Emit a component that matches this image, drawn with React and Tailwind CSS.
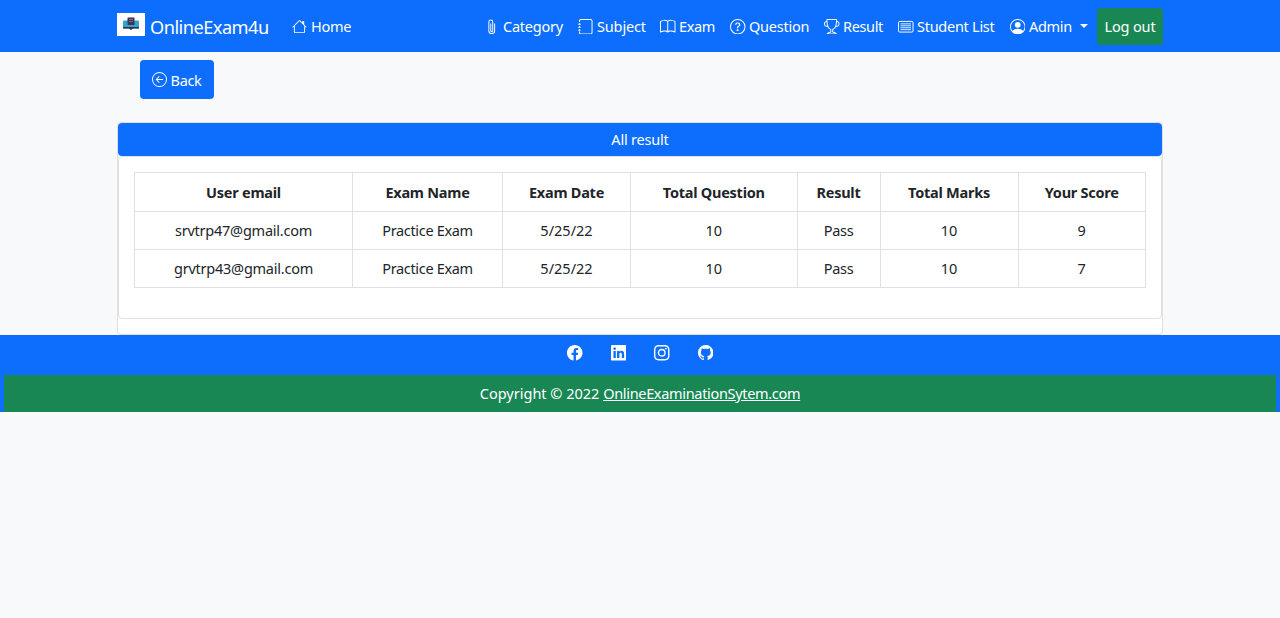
import {
  BsHouse, BsPaperclip, BsJournal, BsBook, BsQuestionCircle, BsTrophy,
  BsPersonCircle, BsArrowLeftCircle, BsFacebook, BsLinkedin, BsInstagram, BsGithub,
} from 'react-icons/bs';

function ListCard({ className }) {
  return (
    <svg viewBox="0 0 16 16" fill="none" stroke="currentColor" strokeLinecap="round" className={className}>
      <rect x=".5" y="2.500" width="15" height="11" rx="1.200" />
      <path d="M3 5h10M3 7h10M3 9h10M3 11h10" strokeWidth=".9" />
    </svg>
  );
}

const navItems = [
  { label: 'Category', Icon: BsPaperclip, box: 'w-[94px]', text: 'tracking-[-0.25px]' },
  { label: 'Subject', Icon: BsJournal, box: 'w-[82px]', text: 'tracking-[-0.15px]' },
  { label: 'Exam', Icon: BsBook, box: 'w-[70px]', text: 'tracking-[-0.4px]' },
  { label: 'Question', Icon: BsQuestionCircle, box: 'w-[94px]', text: 'tracking-[-0.25px]' },
  { label: 'Result', Icon: BsTrophy, box: 'w-[74px]', text: 'tracking-[-0.35px]' },
  { label: 'Student List', Icon: ListCard, box: 'w-[111.500px]', text: 'tracking-[-0.27px]' },
];

const columns = [
  { label: 'User email', width: 'w-[218px]' },
  { label: 'Exam Name', width: 'w-[150px]' },
  { label: 'Exam Date', width: 'w-[128px]' },
  { label: 'Total Question', width: 'w-[166.500px]' },
  { label: 'Result', width: 'w-[83px]' },
  { label: 'Total Marks', width: 'w-[138px]' },
  { label: 'Your Score', width: 'w-[127.500px]' },
];

const rows = [
  ['srvtrp47@gmail.com', 'Practice Exam', '5/25/22', '10', 'Pass', '10', '9'],
  ['grvtrp43@gmail.com', 'Practice Exam', '5/25/22', '10', 'Pass', '10', '7'],
];

const cellTracking = ['tracking-[-0.24px]', 'tracking-[-0.34px]', '', '', 'tracking-[-0.3px]', '', ''];

function Logo() {
  return (
    <svg viewBox="0 0 28 23" className="mb-[4px] h-[23px] w-[28px] shrink-0">
      <rect width="28" height="23" fill="#fff" />
      <rect x="6" y="7.500" width="16" height="8" rx="1" fill="#35a3d0" />
      <path d="M6 14h16v1.500h-6l-2 1.500-2-1.500H6z" fill="#27324f" />
      <rect x="10.500" y="4.500" width="7" height="7.500" rx=".5" fill="#3d3554" />
      <path d="M12 6.500h4M12 8.500h4" stroke="#8d7b96" strokeWidth=".8" />
    </svg>
  );
}

export default function App() {
  return (
    <div className="min-h-[618px] bg-[#f8f9fb] font-['Noto_Sans',sans-serif] text-[14.5px] leading-[22px] text-[#212529]">
      <header className="flex h-[52px] items-center bg-[#0d6efd] pl-[117px] text-white">
        <Logo />
        <span className="ml-[5px] w-[142px] whitespace-nowrap pt-px text-[18.2px] tracking-[-0.52px]">OnlineExam4u</span>
        <a className="flex w-[192px] items-center gap-[4px]">
          <BsHouse className="mt-px size-[15px] shrink-0" />
          <span className="tracking-[-0.3px]">Home</span>
        </a>
        <nav className="flex items-center">
          {navItems.map(({ label, Icon, box, text }) => (
            <a key={label} className={`flex shrink-0 items-center gap-[3.500px] whitespace-nowrap ${box}`}>
              <Icon className="mt-px size-[15.500px] shrink-0" />
              <span className={text}>{label}</span>
            </a>
          ))}
          <a className="flex w-[87.500px] items-center gap-[4px]">
            <BsPersonCircle className="mt-px size-[15.500px] shrink-0" />
            <span className="tracking-[-0.3px]">Admin</span>
            <svg viewBox="0 0 8 4" className="-mt-px ml-[4px] h-[4px] w-[8px]"><path d="M0 0h8L4 4z" fill="white" /></svg>
          </a>
        </nav>
        <button className="h-[37px] w-[66px] whitespace-nowrap rounded-[4px] bg-[#198754] tracking-[-0.15px]">Log out</button>
      </header>

      <main className="mx-auto w-[1046px]">
        <button className="ml-[22.500px] mt-[8px] flex h-[39px] w-[74px] items-center justify-center gap-[4px] rounded-[4px] bg-[#0d6efd] text-white">
          <BsArrowLeftCircle className="size-[15px]" />
          <span className="tracking-[-0.35px]">Back</span>
        </button>
        <section className="mt-[23px] h-[213px] rounded-[4px] border border-[#dfe0e3] bg-white">
          <h1 className="h-[33px] rounded-[4px] bg-[#0d6efd] pt-[5px] text-center tracking-[-0.2px] text-white">All result</h1>
          <div className="h-[163px] rounded-[4px] border border-[#dfe0e3] px-[15px] pt-[15px]">
            <table className="w-[1011px] table-fixed border-collapse text-center">
              <thead>
                <tr className="h-[38.500px]">
                  {columns.map(({ label, width }) => (
                    <th key={label} className={`border border-[#dee2e6] font-bold tracking-[-0.25px] ${width}`}>{label}</th>
                  ))}
                </tr>
              </thead>
              <tbody>
                {rows.map((row) => (
                  <tr key={row[0]} className="h-[38.300px]">
                    {row.map((cell, i) => (
                      <td key={i} className={`border border-[#dee2e6] ${cellTracking[i]}`}>{cell}</td>
                    ))}
                  </tr>
                ))}
              </tbody>
            </table>
          </div>
        </section>
      </main>

      <footer className="h-[77px] bg-[#0d6efd] px-[4px] text-white">
        <div className="flex h-[39.500px] items-center justify-center gap-[28px] pb-[4px]">
          <BsFacebook className="size-[15.500px]" />
          <BsLinkedin className="size-[15.500px]" />
          <BsInstagram className="size-[15.500px]" />
          <BsGithub className="size-[15.500px]" />
        </div>
        <p className="h-[37.500px] bg-[#198754] pt-[7.500px] text-center">
          Copyright © 2022 <a className="tracking-[-0.32px] underline">OnlineExaminationSytem.com</a>
        </p>
      </footer>
    </div>
  );
}
